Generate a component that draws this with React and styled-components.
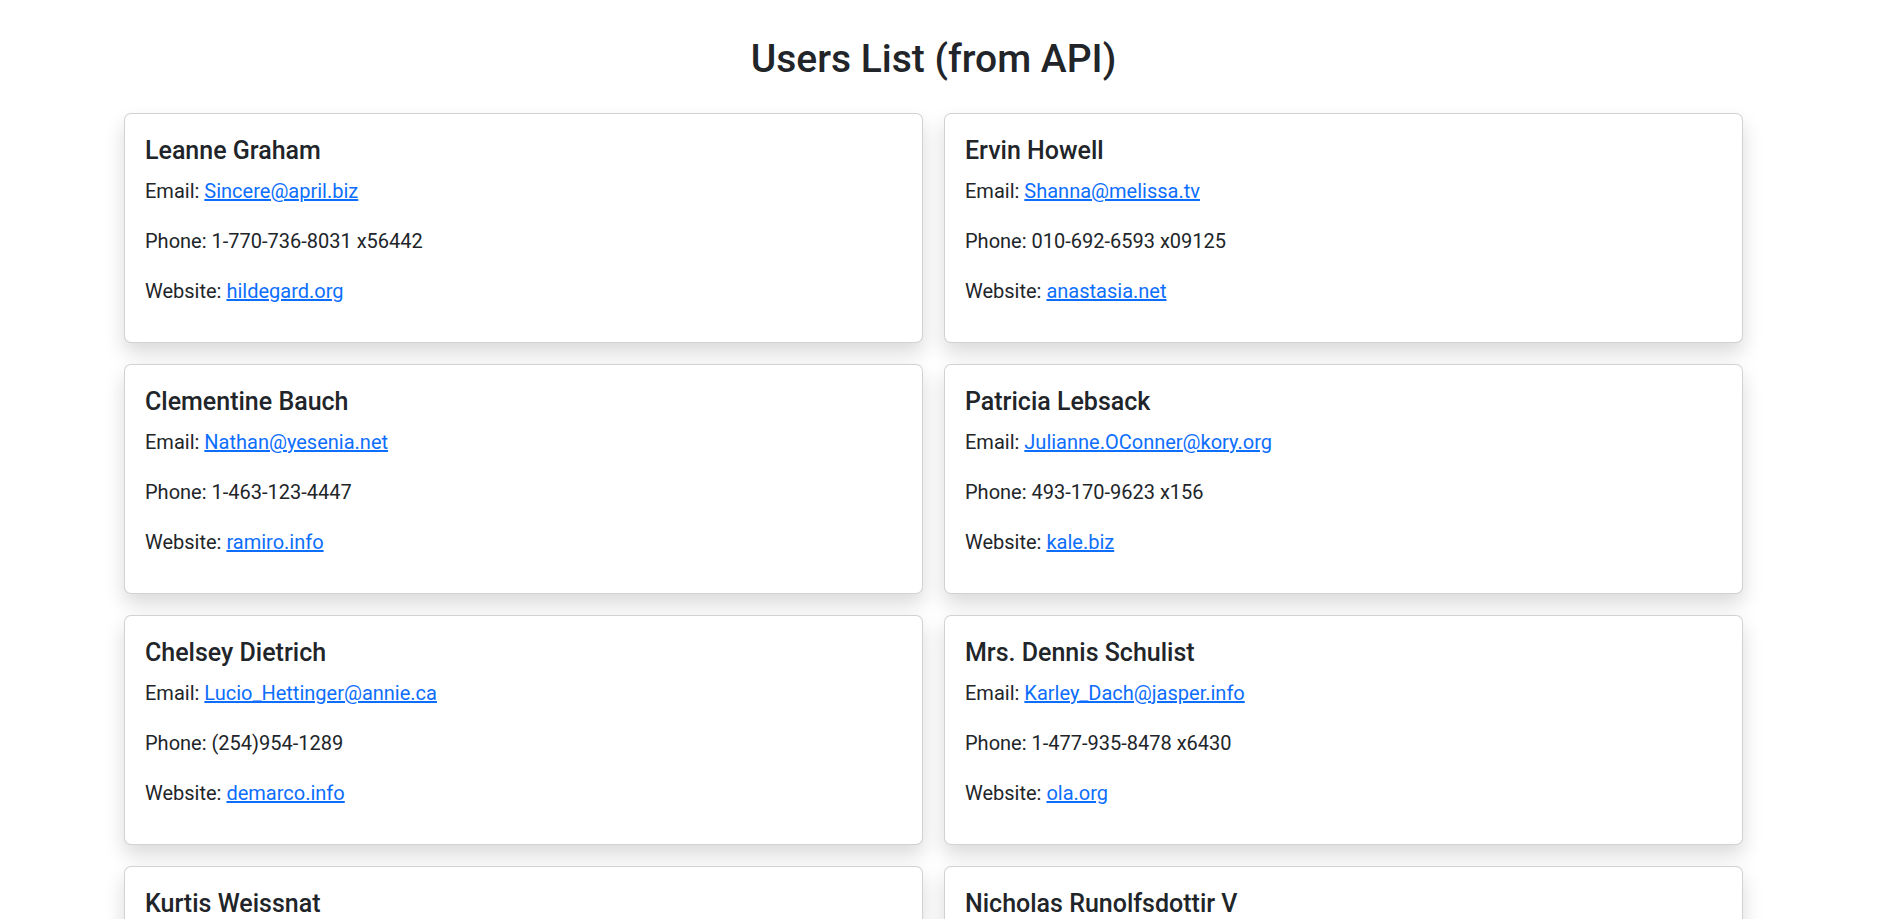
import React from "react";
import styled, { createGlobalStyle } from "styled-components";

const users = [
  { name: "Leanne Graham", email: "Sincere@april.biz", phone: "1-770-736-8031 x56442", website: "hildegard.org" },
  { name: "Ervin Howell", email: "Shanna@melissa.tv", phone: "010-692-6593 x09125", website: "anastasia.net" },
  { name: "Clementine Bauch", email: "Nathan@yesenia.net", phone: "1-463-123-4447", website: "ramiro.info" },
  { name: "Patricia Lebsack", email: "Julianne.OConner@kory.org", phone: "493-170-9623 x156", website: "kale.biz" },
  { name: "Chelsey Dietrich", email: "Lucio_Hettinger@annie.ca", phone: "(254)954-1289", website: "demarco.info" },
  { name: "Mrs. Dennis Schulist", email: "Karley_Dach@jasper.info", phone: "1-477-935-8478 x6430", website: "ola.org" },
  { name: "Kurtis Weissnat", email: "Telly.Hoeger@billy.biz", phone: "210.067.6132", website: "elvis.io" },
  { name: "Nicholas Runolfsdottir V", email: "Sherwood@rosamond.me", phone: "586.493.6943 x140", website: "jacynthe.com" },
  { name: "Glenna Reichert", email: "Chaim_McDermott@dana.io", phone: "(775)976-6794 x41206", website: "conrad.com" },
  { name: "Clementina DuBuque", email: "Rey.Padberg@karina.biz", phone: "024-648-3804", website: "ambrose.net" },
];

function App() {
  return (
    <>
      <GlobalStyle />
      <Page>
        <Title>Users List (from API)</Title>
        <Grid>
          {users.map((u) => (
            <Card key={u.name}>
              <Name>{u.name}</Name>
              <Text>
                Email: <A href={`mailto:${u.email}`}>{u.email}</A>
              </Text>
              <Text>Phone: {u.phone}</Text>
              <Text>
                Website: <A href={`http://${u.website}`}>{u.website}</A>
              </Text>
            </Card>
          ))}
        </Grid>
      </Page>
    </>
  );
}

const GlobalStyle = createGlobalStyle`
  body {
    margin: 0;
    background: #fff;
    color: #212529;
    font-family: "Segoe UI", Roboto, "Noto Sans", sans-serif;
  }
  * {
    box-sizing: border-box;
  }
`;

const Page = styled.div`
  padding: 35px 0 40px 124px;
`;

const Title = styled.h1`
  width: 1619px;
  margin: 0 0 30px;
  text-align: center;
  font-size: 39px;
  font-weight: 500;
  line-height: 48px;
`;

const Grid = styled.div`
  width: 1619px;
  display: grid;
  grid-template-columns: 1fr 1fr;
  column-gap: 21px;
  row-gap: 21px;
`;

const Card = styled.div`
  background: #fff;
  border: 1px solid rgba(0, 0, 0, 0.175);
  border-radius: 7px;
  box-shadow: 0 10px 20px rgba(0, 0, 0, 0.15);
  padding: 22px 20px 16px;
`;

const Name = styled.h5`
  margin: 0 0 10px;
  font-size: 25px;
  font-weight: 500;
  line-height: 30px;
`;

const Text = styled.p`
  margin: 0 0 20px;
  font-size: 20px;
  line-height: 30px;
`;

const A = styled.a`
  color: #0d6efd;
  text-decoration: underline;
`;

export default App;
